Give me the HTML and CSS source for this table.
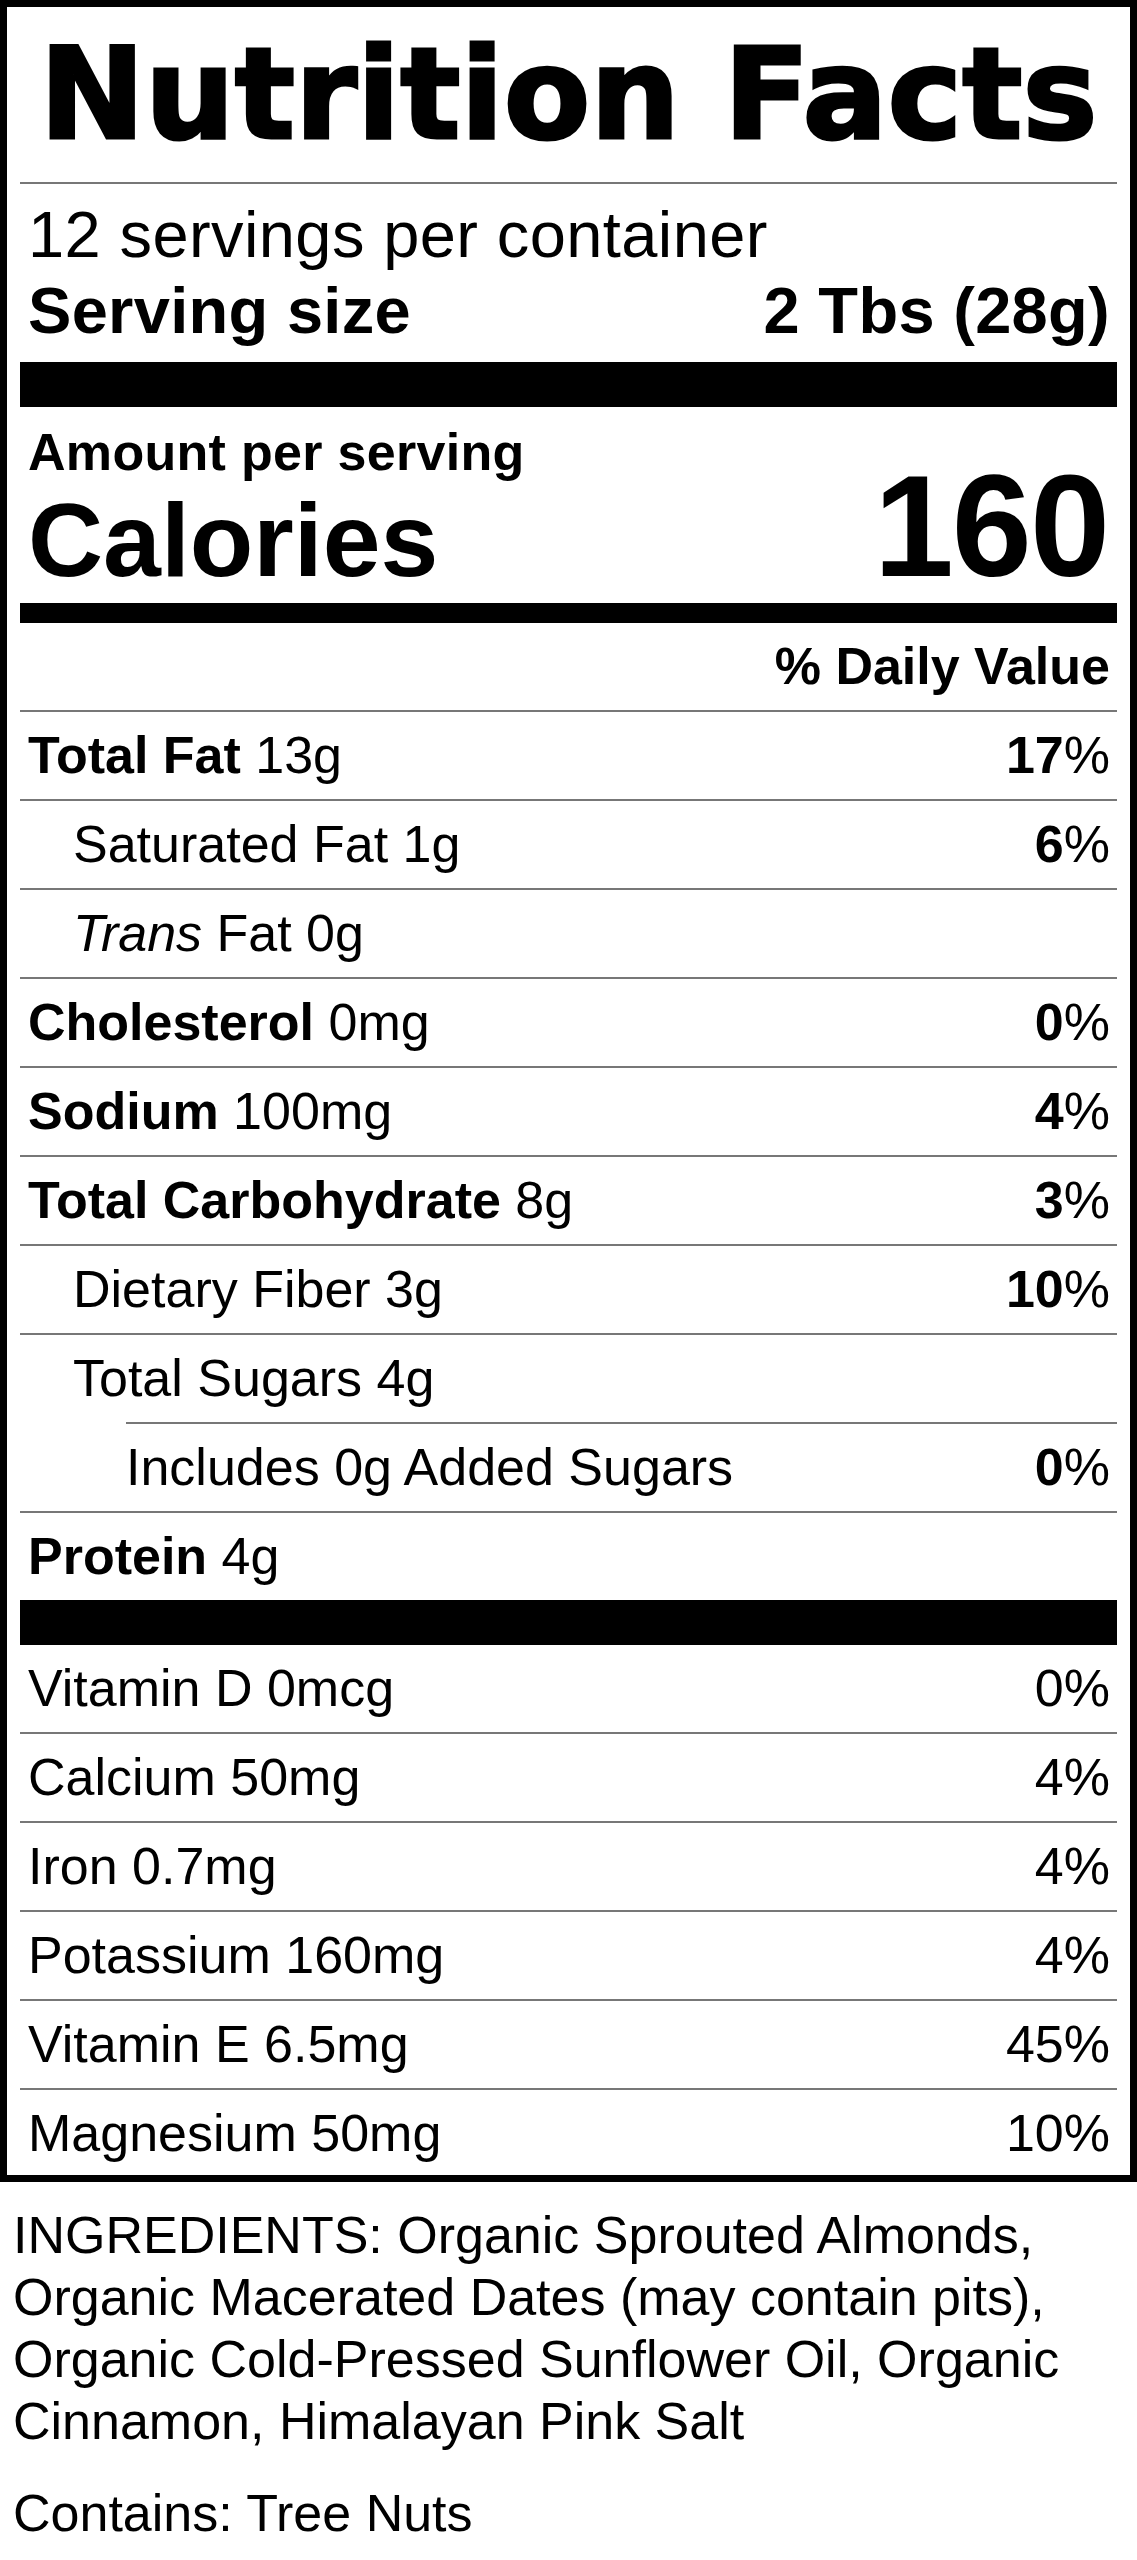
FILE: index.html
```
<!DOCTYPE html>
<html lang="en">
<head>
    <meta charset="UTF-8">
    <title>Nutrition Facts</title>
    <link rel="stylesheet" href="styles.css">
</head>
<body>

<div class="label">
    <h1 class="title">Nutrition Facts</h1>
    <div class="rule"></div>

    <div class="servings">
        <p>12 servings per container</p>
        <p class="serv-size"><span>Serving size</span><span>2 Tbs (28g)</span></p>
    </div>
    <div class="bar bar-lg"></div>

    <div class="amount">
        <p class="amount-label">Amount per serving</p>
        <p class="calories"><span class="cal-label">Calories</span><span class="cal-value">160</span></p>
    </div>
    <div class="bar bar-md"></div>

    <p class="dv-head">% Daily Value</p>

    <ul class="nutrients">
        <li class="row"><span><b>Total Fat</b> 13g</span><span><b>17</b>%</span></li>
        <li class="row indent"><span>Saturated Fat 1g</span><span><b>6</b>%</span></li>
        <li class="row indent"><span><i>Trans</i> Fat 0g</span></li>
        <li class="row"><span><b>Cholesterol</b> 0mg</span><span><b>0</b>%</span></li>
        <li class="row"><span><b>Sodium</b> 100mg</span><span><b>4</b>%</span></li>
        <li class="row"><span><b>Total Carbohydrate</b> 8g</span><span><b>3</b>%</span></li>
        <li class="row indent"><span>Dietary Fiber 3g</span><span><b>10</b>%</span></li>
        <li class="row indent"><span>Total Sugars 4g</span></li>
        <li class="row indent-2"><span>Includes 0g Added Sugars</span><span><b>0</b>%</span></li>
        <li class="row"><span><b>Protein</b> 4g</span></li>
    </ul>
    <div class="bar bar-lg"></div>

    <ul class="vitamins">
        <li class="row"><span>Vitamin D 0mcg</span><span>0%</span></li>
        <li class="row"><span>Calcium 50mg</span><span>4%</span></li>
        <li class="row"><span>Iron 0.7mg</span><span>4%</span></li>
        <li class="row"><span>Potassium 160mg</span><span>4%</span></li>
        <li class="row"><span>Vitamin E 6.5mg</span><span>45%</span></li>
        <li class="row"><span>Magnesium 50mg</span><span>10%</span></li>
    </ul>
</div>

<div class="ingredients">
    <p>INGREDIENTS: Organic Sprouted Almonds, Organic Macerated Dates (may contain pits), Organic Cold-Pressed Sunflower Oil, Organic Cinnamon, Himalayan Pink Salt</p>
    <p class="contains">Contains: Tree Nuts</p>
</div>

</body>
</html>
```

FILE: styles.css
```
body {
    margin: 0;
    background-color: #ffffff;
    color: #000000;
    font-family: "Liberation Sans", Arial, sans-serif;
}
p {
    margin: 0;
}
.label {
    border: 7px solid #000;
    padding: 0 13px;
}
.title {
    margin: 0;
    font-family: "DejaVu Sans", sans-serif;
    font-weight: bold;
    font-size: 126px;
    line-height: 175px;
    text-align: center;
    white-space: nowrap;
    -webkit-text-stroke: 3px #000;
}
.rule {
    height: 2px;
    background-color: #777;
}
.servings {
    padding: 13px 7px 13px 8px;
    font-size: 65px;
    line-height: 76px;
    letter-spacing: 0.4px;
}
.serv-size {
    display: flex;
    justify-content: space-between;
    font-weight: bold;
    letter-spacing: 0.3px;
}
.bar {
    background-color: #000;
}
.bar-lg {
    height: 45px;
}
.bar-md {
    height: 20px;
}
.amount {
    padding: 15px 7px 0 8px;
}
.amount-label {
    font-weight: bold;
    font-size: 52px;
    line-height: 60px;
    letter-spacing: 0.3px;
}
.calories {
    display: flex;
    justify-content: space-between;
    align-items: baseline;
    height: 121px;
    font-weight: bold;
}
.cal-label {
    font-size: 104px;
    line-height: 104px;
}
.cal-value {
    font-size: 144px;
    line-height: 90px;
    letter-spacing: -2px;
    margin-right: 2px;
}
.dv-head {
    padding: 0 7px 0 8px;
    text-align: right;
    font-weight: bold;
    font-size: 52px;
    line-height: 87px;
}
.nutrients,
.vitamins {
    list-style: none;
    margin: 0;
    padding: 0;
}
.row {
    display: flex;
    justify-content: space-between;
    border-top: 2px solid #777;
    padding: 0 7px 0 8px;
    height: 87px;
    font-size: 52px;
    line-height: 87px;
}
.row.indent {
    padding-left: 53px;
}
.row.indent-2 {
    margin-left: 106px;
    padding-left: 0;
}
.vitamins .row:first-child {
    border-top: 0;
}
.vitamins .row:last-child {
    height: 85px;
}
.ingredients {
    padding: 0 13px;
    font-size: 52px;
    line-height: 62px;
}
.ingredients p {
    margin-top: 22px;
}
.ingredients .contains {
    margin-top: 30px;
}
```
